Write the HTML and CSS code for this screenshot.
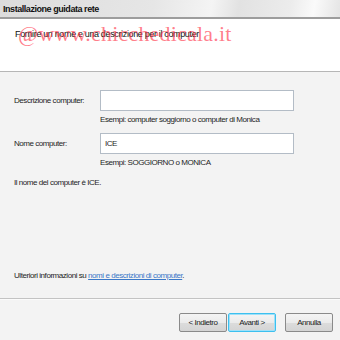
FILE: index.html
```html
<!DOCTYPE html>
<html>
<head>
  <meta charset="utf-8">
  <title>Installazione guidata rete</title>
  <link rel="stylesheet" href="styles.css">
</head>
<body>
  <div class="window">
    <div class="titlebar">Installazione guidata rete</div>
    <div class="header">
      <span class="heading">Fornire un nome e una descrizione per il computer</span>
      <span class="watermark">@www.chicchedicala.it</span>
    </div>
    <div class="content">
      <div class="form">
        <label class="label">Descrizione computer:</label>
        <div class="field">
          <div class="input"></div>
          <div class="hint">Esempi: computer soggiorno o computer di Monica</div>
        </div>
        <label class="label">Nome computer:</label>
        <div class="field">
          <div class="input">ICE</div>
          <div class="hint">Esempi: SOGGIORNO o MONICA</div>
        </div>
      </div>
      <p class="status">Il nome del computer è ICE.</p>
      <p class="more">Ulteriori informazioni su <a href="#">nomi e descrizioni di computer</a>.</p>
    </div>
    <div class="footer">
      <button class="btn">&lt; Indietro</button>
      <button class="btn default">Avanti &gt;</button>
      <button class="btn cancel">Annulla</button>
    </div>
  </div>
</body>
</html>
```

FILE: styles.css
```css
body {
  margin: 0;
  font-family: "Liberation Sans", Arial, sans-serif;
  color: #1e1e1e;
}

.window {
  width: 340px;
  height: 340px;
  background-color: #f3f3f3;
  display: flex;
  flex-direction: column;
  overflow: hidden;
}

.titlebar {
  height: 17px;
  line-height: 18px;
  padding-left: 3px;
  font-size: 9px;
  font-weight: bold;
  letter-spacing: -0.45px;
  color: #111;
  border-bottom: 2px solid #9d9d9d;
  background: linear-gradient(100deg, #dcdcdc 0%, #e6e6e6 45%, #f4f4f4 62%, #e2e2e2 70%, #ececec 85%, #fafafa 92%, #e4e4e4 100%);
}

.header {
  position: relative;
  height: 52px;
  background-color: #fff;
  border-bottom: 1px solid #b6b6b6;
  padding-left: 15px;
}

.heading {
  display: block;
  padding-top: 10px;
  font-size: 9px;
  letter-spacing: -0.35px;
  color: #111;
}

.watermark {
  position: absolute;
  left: 18px;
  top: 2px;
  font-family: "Liberation Serif", "Times New Roman", serif;
  font-size: 22px;
  letter-spacing: 0.2px;
  color: rgba(255, 40, 60, 0.6);
}

.content {
  height: 227px;
  padding: 18px 0 0 14px;
  box-sizing: border-box;
  border-bottom: 1px solid #c3c3c3;
  font-size: 8px;
  line-height: 9px;
  letter-spacing: -0.45px;
}

.form {
  display: grid;
  grid-template-columns: 86px 194px;
  row-gap: 9px;
}

.label {
  padding-top: 6px;
}

.input {
  height: 21px;
  box-sizing: border-box;
  border: 1px solid #b3bcc6;
  background-color: #fff;
  padding: 5px 0 0 4px;
}

.hint {
  margin-top: 4px;
}

.status {
  margin: 11px 0 0;
}

.more {
  margin: 84px 0 0;
}

.more a {
  color: #3a78c8;
}

.footer {
  border-top: 1px solid #fbfbfb;
  display: flex;
  justify-content: flex-end;
  padding: 13px 7px 0 0;
}

.btn {
  width: 48px;
  height: 19px;
  margin: 0 0 0 1px;
  padding: 0;
  font-family: inherit;
  font-size: 8px;
  letter-spacing: -0.45px;
  color: #222;
  border: 1px solid #8a8a8a;
  border-radius: 2px;
  background: linear-gradient(#f4f4f4 0%, #ebebeb 50%, #dcdcdc 51%, #d4d4d4 100%);
}

.btn.default {
  border-color: #3cc0ef;
  box-shadow: inset 0 0 0 1px #9fe0f8;
}

.btn.cancel {
  margin-left: 9px;
}
```
